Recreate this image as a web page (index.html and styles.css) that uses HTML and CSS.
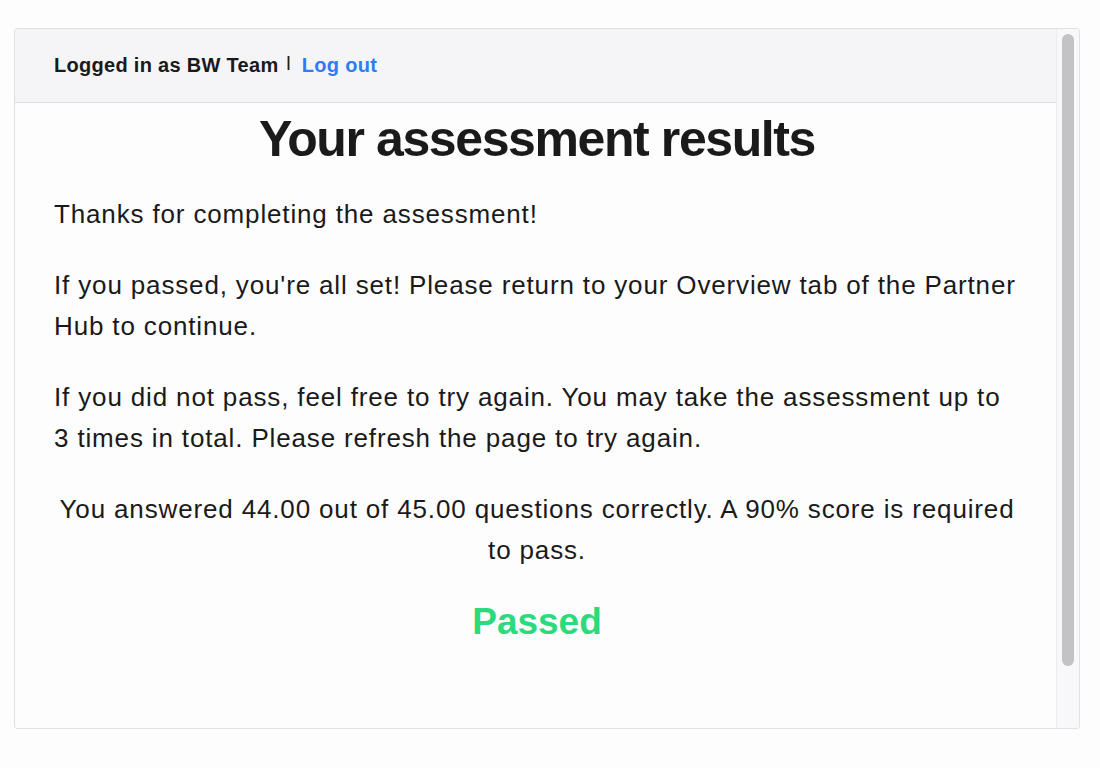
FILE: index.html
```html
<!DOCTYPE html>
<html lang="en">
<head>
<meta charset="utf-8">
<title>Assessment results</title>
<link rel="stylesheet" href="styles.css">
</head>
<body>
<div class="frame">
	<div class="pane">
		<div class="user_bar">
			<span class="user_name">Logged in as BW Team</span>
			<span class="sep">|</span>
			<a class="logout" href="">Log out</a>
		</div>
		<div class="results">
			<h1>Your assessment results</h1>
			<p>Thanks for completing the assessment!</p>
			<p>If you passed, you're all set! Please return to your Overview tab of the Partner Hub to continue.</p>
			<p>If you did not pass, feel free to try again. You may take the assessment up to 3 times in total. Please refresh the page to try again.</p>
			<p class="score">You answered 44.00 out of 45.00 questions correctly. A 90% score is required to pass.</p>
			<p class="status">Passed</p>
		</div>
	</div>
	<div class="gutter"><div class="thumb"></div></div>
</div>
</body>
</html>
```

FILE: styles.css
```css
* {margin:0; padding:0}
body {
	background-color:#fefdfe;
	font-family:"Liberation Sans", Arial, sans-serif;
	color:#1a1a1a;
	padding:28px 20px 0 14px;
}

.frame {
	display:flex;
	height:699px;
	border:1px solid #e1e0e3;
	border-radius:3px;
	background-color:#fefdfe;
	overflow:hidden;
}
.pane {flex:1}

.user_bar {
	height:73px;
	display:flex;
	align-items:center;
	padding-left:39px;
	background-color:#f5f5f8;
	border-bottom:1px solid #dedde0;
	font-size:20px;
	font-weight:bold;
	letter-spacing:0.3px;
}
.user_bar .sep {
	margin:0 11px 0 8px;
	font-size:14px;
	font-weight:bold;
	position:relative;
	top:-4px;
	color:#222;
}
.user_bar .logout {
	color:#2f7cf3;
	text-decoration:none;
}

.results {
	padding:6px 36px 0 39px;
	font-size:26px;
	letter-spacing:0.85px;
	line-height:41px;
}
.results h1 {
	text-align:center;
	font-size:50px;
	line-height:60px;
	letter-spacing:-1.4px;
	margin-bottom:25px;
}
.results p {margin-bottom:30px}
.results .score {text-align:center}
.results .status {
	text-align:center;
	color:#2bdb7b;
	font-weight:bold;
	font-size:37px;
	letter-spacing:0;
}

/* scrollbar column */
.gutter {
	width:23px;
	box-sizing:border-box;
	background-color:#f8f8fa;
	border-left:1px solid #ececee;
	padding:5px 0 0 5px;
}
.thumb {
	width:12px;
	height:632px;
	border-radius:6px;
	background-color:#c3c3c5;
}
```
